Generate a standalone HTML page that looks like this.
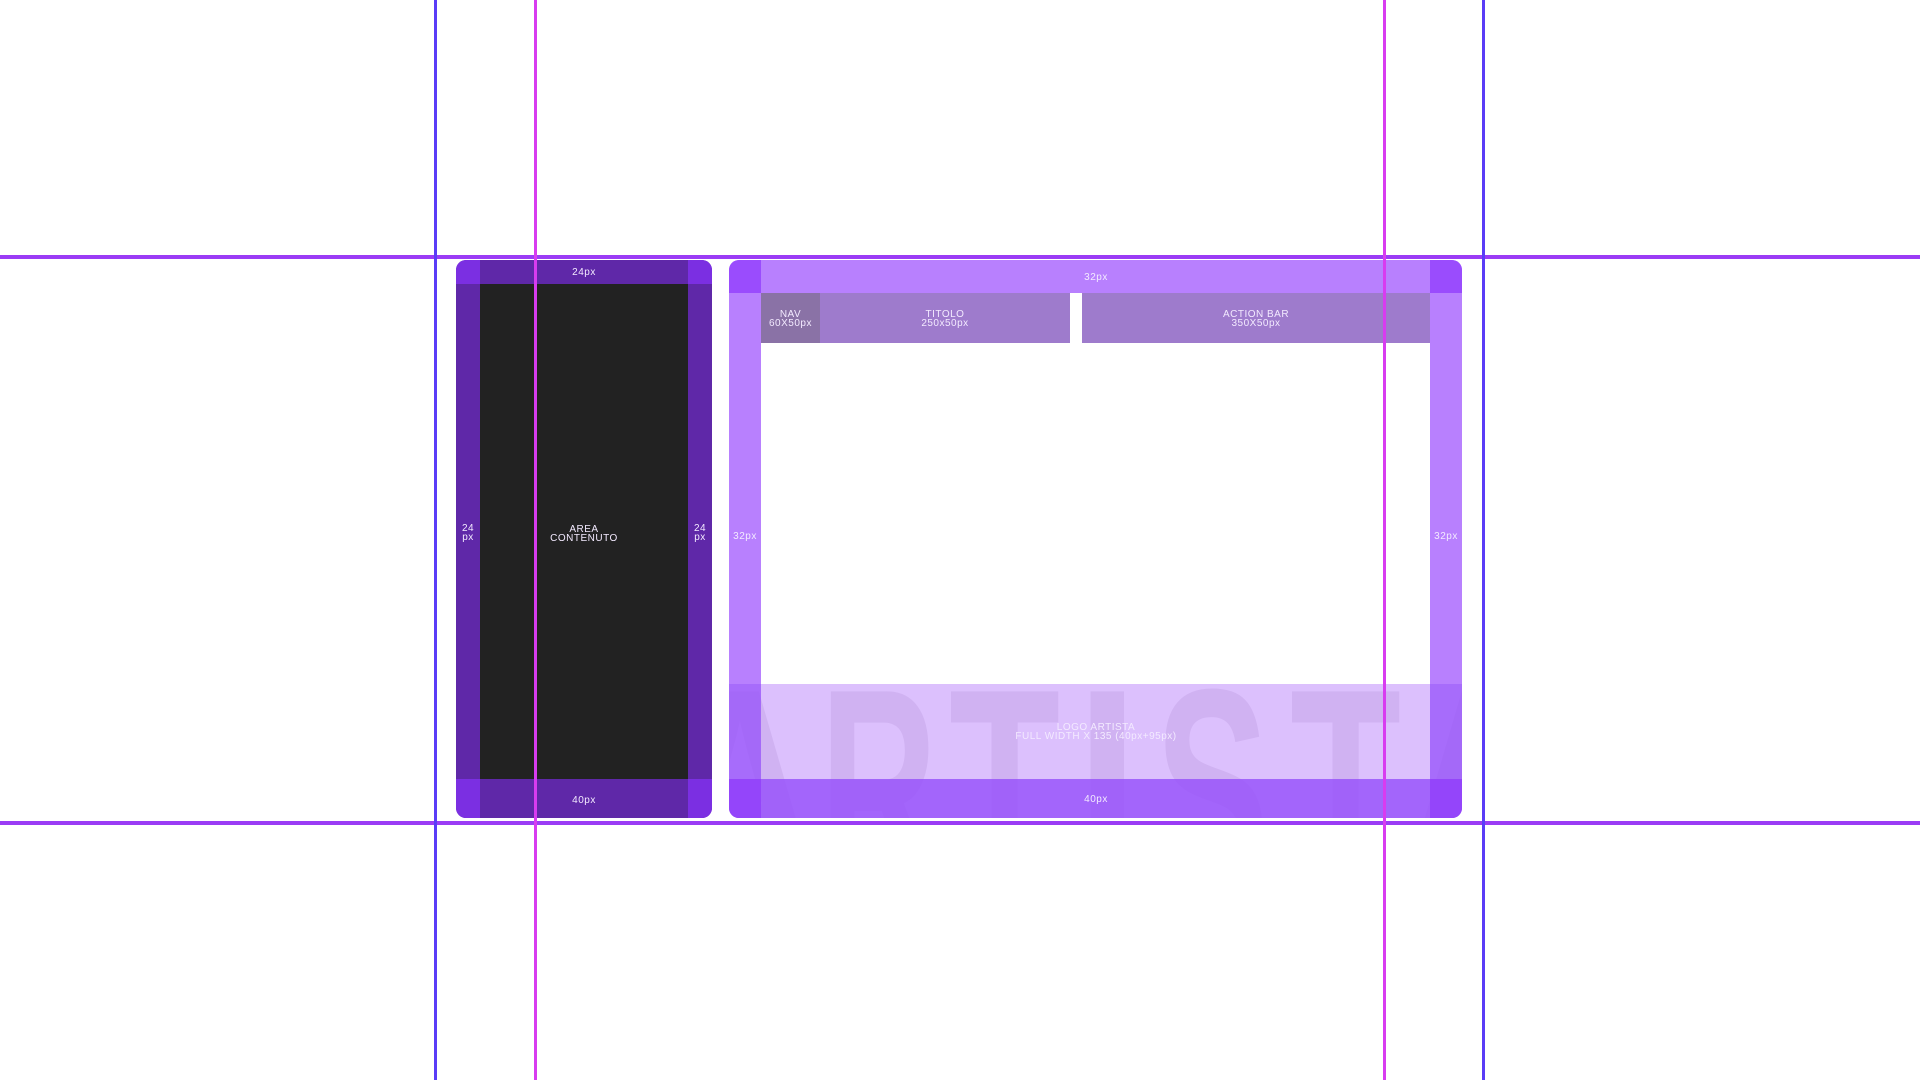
<!DOCTYPE html>
<html><head><meta charset="utf-8"><style>
body{margin:0;width:1920px;height:1080px;background:#fff;position:relative;overflow:hidden;font-family:"Liberation Sans",sans-serif;}
.a{position:absolute;}
.t{position:absolute;color:#f3eaff;font-size:10px;line-height:9px;text-align:center;letter-spacing:.5px;}
.L{position:absolute;top:388px;font:bold 280px/280px "Liberation Sans",sans-serif;color:#d0b2f2;transform-origin:0 0;white-space:nowrap}
</style></head><body>
<!-- left panel -->
<div class="a" style="left:456px;top:260px;width:256px;height:558px;background:#5f28a8;border-radius:10px;overflow:hidden">
 <div class="a" style="left:0;top:0;width:24px;height:24px;background:#7b2fe2"></div>
 <div class="a" style="right:0;top:0;width:24px;height:24px;background:#7b2fe2"></div>
 <div class="a" style="left:0;bottom:0;width:24px;height:39px;background:#7b2fe2"></div>
 <div class="a" style="right:0;bottom:0;width:24px;height:39px;background:#7b2fe2"></div>
 <div class="a" style="left:24px;top:24px;width:208px;height:495px;background:#222"></div>
</div>
<div class="t" style="left:560px;top:268px;width:48px">24px</div>
<div class="t" style="left:456px;top:524px;width:24px">24<br>px</div>
<div class="t" style="left:688px;top:524px;width:24px">24<br>px</div>
<div class="t" style="left:534px;top:525px;width:100px">AREA<br>CONTENUTO</div>
<div class="t" style="left:560px;top:796px;width:48px">40px</div>
<!-- right panel -->
<div class="a" style="left:729px;top:260px;width:733px;height:558px;background:#fff;border-radius:10px;overflow:hidden">
 <div class="a" style="left:0;top:0;width:733px;height:33px;background:#b880fe"></div>
 <div class="a" style="left:0;top:0;width:32px;height:33px;background:#9a4cfd"></div>
 <div class="a" style="right:0;top:0;width:32px;height:33px;background:#9a4cfd"></div>
 <div class="a" style="left:0;top:33px;width:32px;height:391px;background:#b880fe"></div>
 <div class="a" style="right:0;top:33px;width:32px;height:391px;background:#b880fe"></div>
 <div class="a" style="left:32px;top:33px;width:59px;height:50px;background:#8a72a6"></div>
 <div class="a" style="left:91px;top:33px;width:250px;height:50px;background:#9e7bcc"></div>
 <div class="a" style="left:353px;top:33px;width:348px;height:50px;background:#9e7bcc"></div>
 <div class="a" style="left:0;top:424px;width:733px;height:134px;background:#dcc0fd"></div>
 <div class="L" style="left:-70px;transform:scaleX(0.8)">A</div>
 <div class="L" style="left:91px;transform:scaleX(0.58)">R</div>
 <div class="L" style="left:220px;transform:scaleX(0.65)">T</div>
 <div class="L" style="left:346px;transform:scaleX(0.83)">I</div>
 <div class="L" style="left:426px;transform:scaleX(0.61)">S</div>
 <div class="L" style="left:561px;transform:scaleX(0.65)">T</div>
 <div class="L" style="left:671px;transform:scaleX(0.8)">A</div>
 <div class="a" style="left:0;top:0;width:733px;height:424px;background:transparent"></div>
 <div class="a" style="left:0;top:424px;width:32px;height:95px;background:rgba(150,80,250,.75)"></div>
 <div class="a" style="right:0;top:424px;width:32px;height:95px;background:rgba(150,80,250,.75)"></div>
 <div class="a" style="left:0;top:519px;width:733px;height:39px;background:rgba(150,80,250,.82)"></div>
 <div class="a" style="left:0;top:519px;width:32px;height:39px;background:#9445fa"></div>
 <div class="a" style="right:0;top:519px;width:32px;height:39px;background:#9445fa"></div>
</div>
<div class="t" style="left:1070px;top:273px;width:52px">32px</div>
<div class="t" style="left:761px;top:310px;width:59px">NAV<br>60X50px</div>
<div class="t" style="left:820px;top:310px;width:250px">TITOLO<br>250x50px</div>
<div class="t" style="left:1082px;top:310px;width:348px">ACTION BAR<br>350X50px</div>
<div class="t" style="left:729px;top:532px;width:32px">32px</div>
<div class="t" style="left:1430px;top:532px;width:32px">32px</div>
<div class="t" style="left:896px;top:723px;width:400px">LOGO ARTISTA<br>FULL WIDTH X 135 (40px+95px)</div>
<div class="t" style="left:1070px;top:795px;width:52px">40px</div>
<!-- guides -->
<div class="a" style="left:0;top:255px;width:1920px;height:4px;background:#9b3cf5"></div>
<div class="a" style="left:0;top:821px;width:1920px;height:4px;background:#9b3cf5"></div>
<div class="a" style="left:434px;top:0;width:3px;height:1080px;background:#5a3cf7"></div>
<div class="a" style="left:1482px;top:0;width:3px;height:1080px;background:#5a3cf7"></div>
<div class="a" style="left:534px;top:0;width:3px;height:1080px;background:#d83cf0"></div>
<div class="a" style="left:1383px;top:0;width:3px;height:1080px;background:#d83cf0"></div>
</body></html>
